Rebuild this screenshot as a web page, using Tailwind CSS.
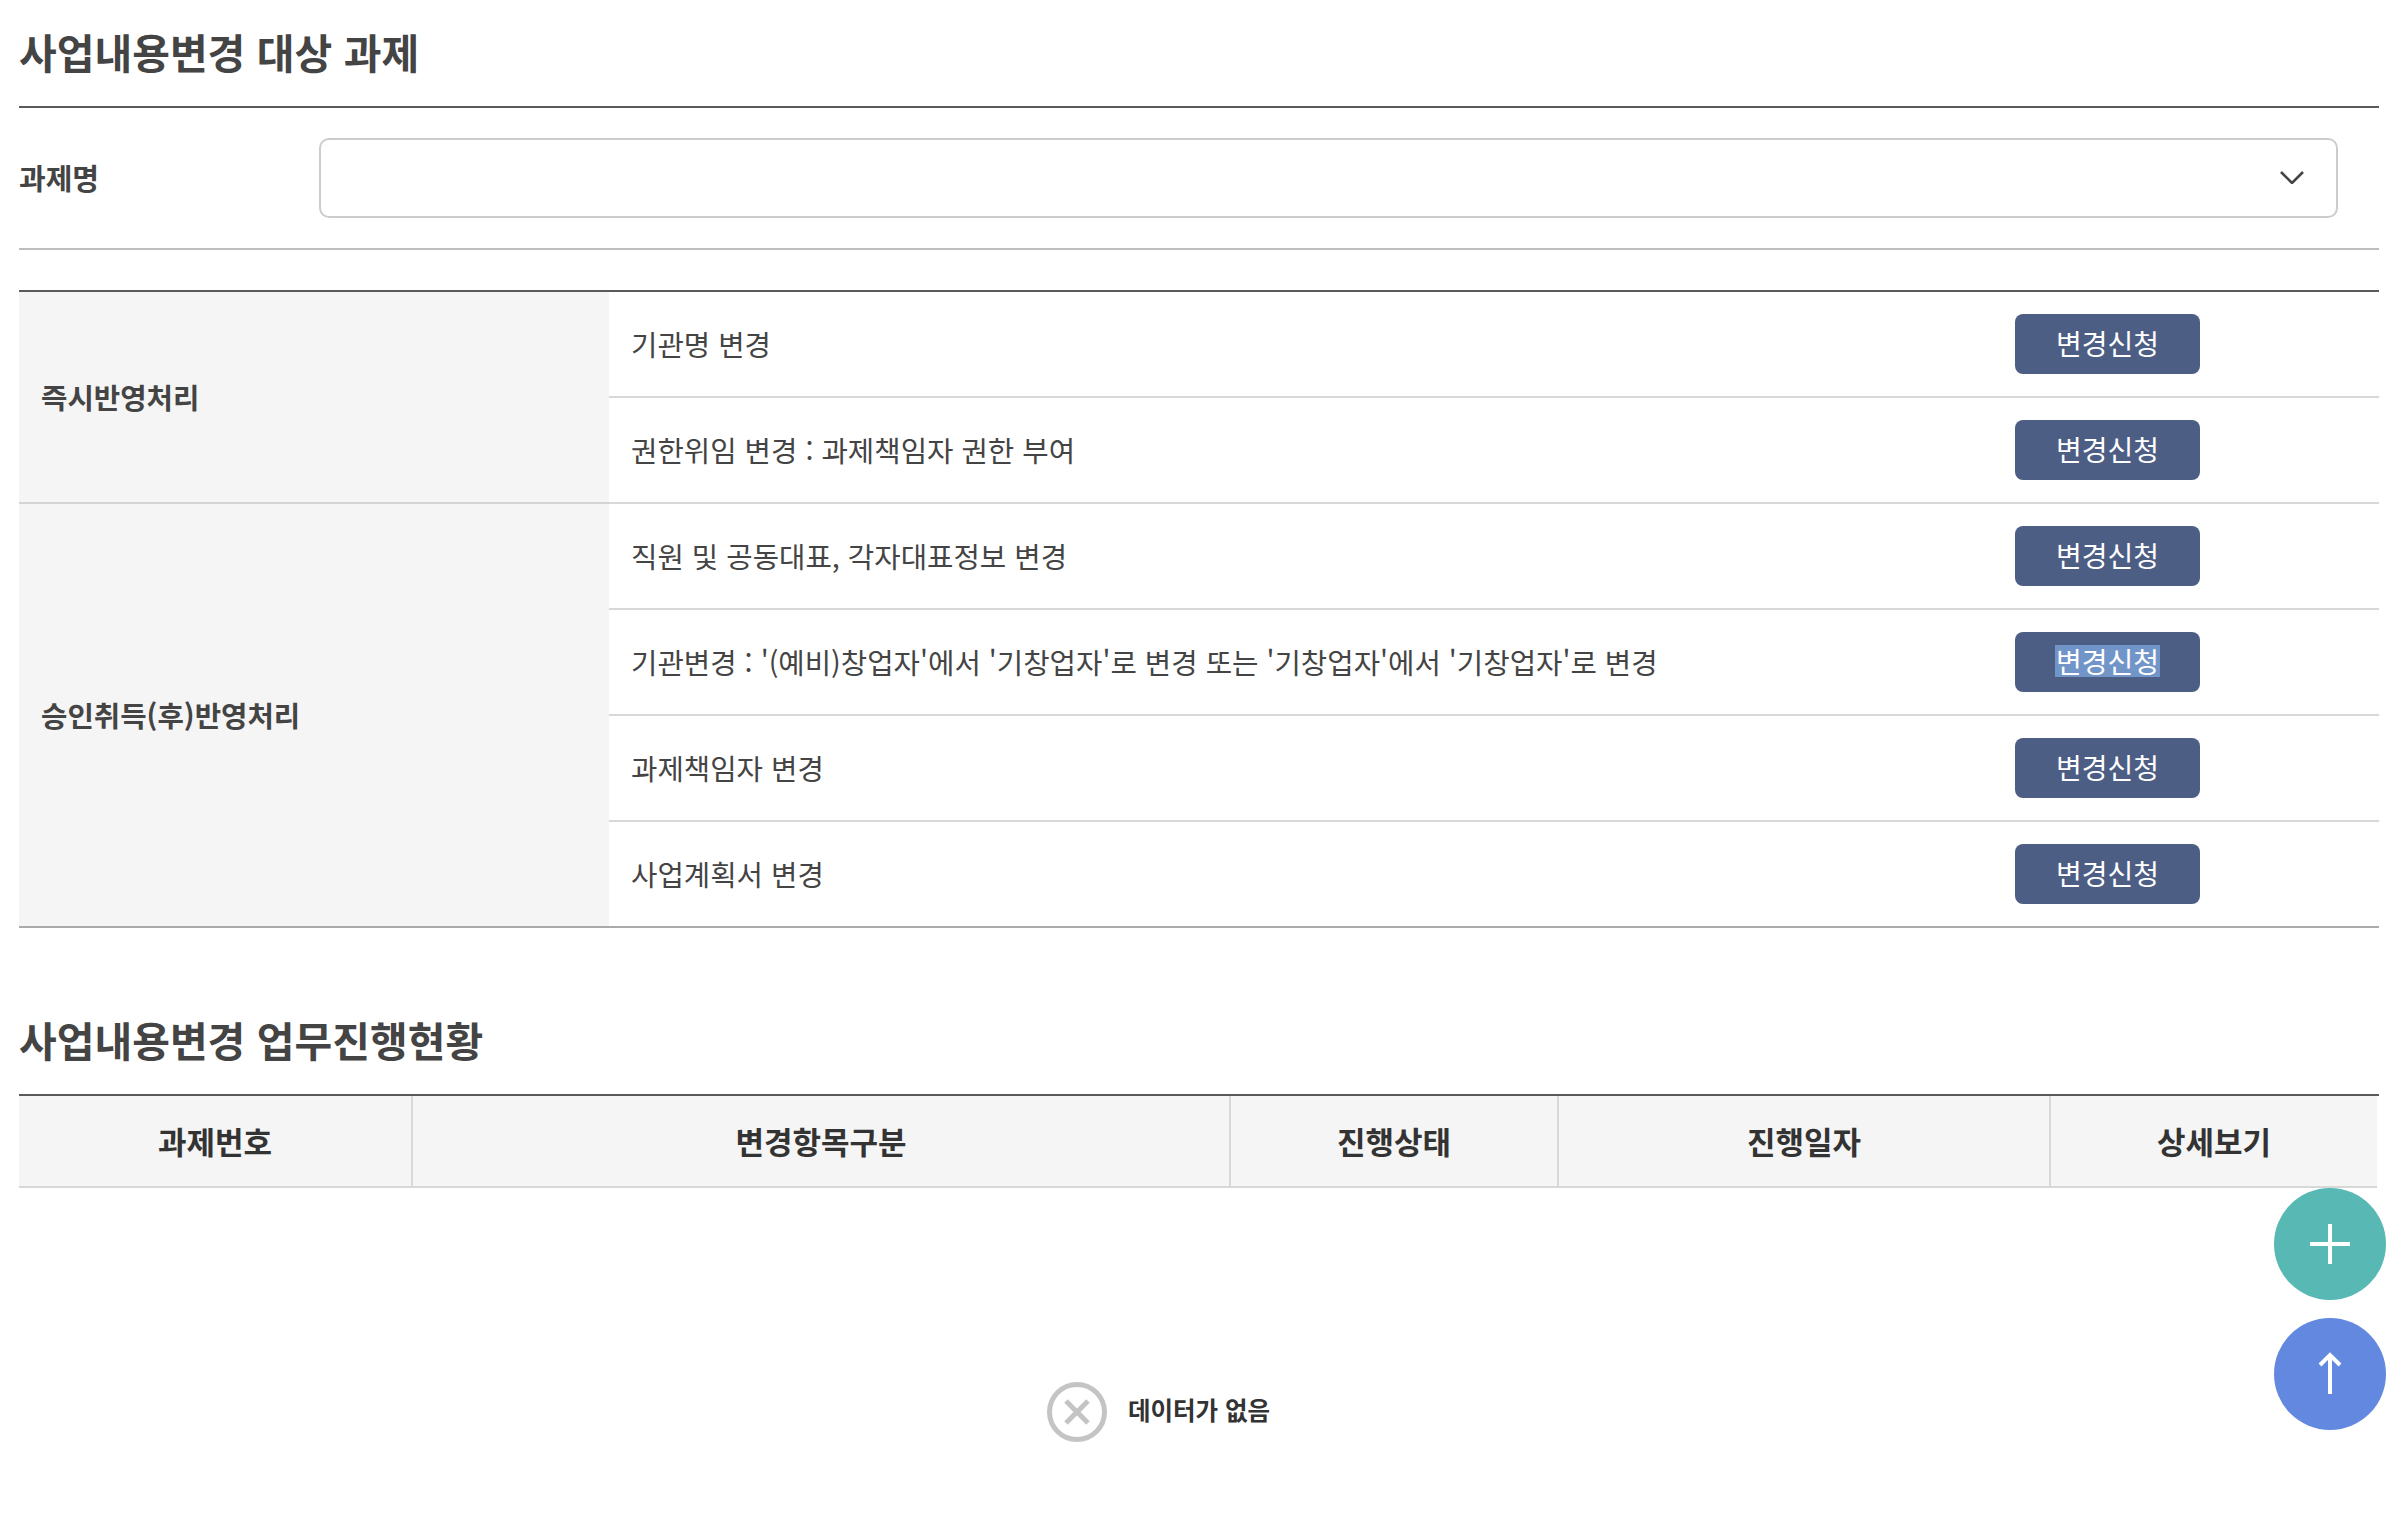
<!DOCTYPE html>
<html lang="ko">
<head>
    <meta charset="UTF-8">
    <title>사업내용변경</title>
    <script src="https://cdn.jsdelivr.net/npm/@tailwindcss/browser@4"></script>
</head>
<body class="relative h-[1536px] overflow-hidden bg-white font-['Noto_Sans_CJK_KR',sans-serif] text-[28.7px] text-[#444]">
    <main class="ml-[19px] w-[2360px]">
        <!-- 대상 과제 -->
        <section>
            <h2 class="flex h-[108px] items-center border-b-2 border-[#5a5a5a] pb-[2px] text-[41px] font-bold">사업내용변경 대상 과제</h2>
            <div class="flex items-center border-b-2 border-[#bdbdbd] pt-[30px] pb-[30px]">
                <label class="w-[300px] text-[29px] font-bold">과제명</label>
                <div class="relative h-[80px] w-[2019px] rounded-[10px] border-2 border-[#cccccc]">
                    <svg class="absolute right-[32px] top-[30px]" width="24" height="14" viewBox="0 0 24 14" fill="none" stroke="#444" stroke-width="2.6"><path d="M1 2l11 11L23 2"/></svg>
                </div>
            </div>
        </section>

        <table class="mt-[40px] w-full table-fixed border-separate border-spacing-0 border-t-2 border-[#5a5a5a]">
            <colgroup><col class="w-[590px]"><col><col class="w-[364px]"></colgroup>
            <tbody>
                <tr class="h-[106px]">
                    <th rowspan="2" class="border-b-2 border-[#d4d4d4] bg-[#f5f5f5] pl-[22px] text-left font-bold">즉시반영처리</th>
                    <td class="border-b-2 border-[#d8d8d8] pl-[22px]">기관명 변경</td>
                    <td class="border-b-2 border-[#d8d8d8]"><button class="h-[60px] w-[185px] rounded-[8px] bg-[#4d5e85] pb-[3px] text-[28px] text-white">변경신청</button></td>
                </tr>
                <tr class="h-[106px]">
                    <td class="border-b-2 border-[#d8d8d8] pl-[22px]">권한위임 변경 : 과제책임자 권한 부여</td>
                    <td class="border-b-2 border-[#d8d8d8]"><button class="h-[60px] w-[185px] rounded-[8px] bg-[#4d5e85] pb-[3px] text-[28px] text-white">변경신청</button></td>
                </tr>
                <tr class="h-[106px]">
                    <th rowspan="4" class="border-b-2 border-[#aaaaaa] bg-[#f5f5f5] pl-[22px] text-left font-bold">승인취득(후)반영처리</th>
                    <td class="border-b-2 border-[#d8d8d8] pl-[22px]">직원 및 공동대표, 각자대표정보 변경</td>
                    <td class="border-b-2 border-[#d8d8d8]"><button class="h-[60px] w-[185px] rounded-[8px] bg-[#4d5e85] pb-[3px] text-[28px] text-white">변경신청</button></td>
                </tr>
                <tr class="h-[106px]">
                    <td class="border-b-2 border-[#d8d8d8] pl-[22px]">기관변경 : '(예비)창업자'에서 '기창업자'로 변경 또는 '기창업자'에서 '기창업자'로 변경</td>
                    <td class="border-b-2 border-[#d8d8d8]"><button class="h-[60px] w-[185px] rounded-[8px] bg-[#4d5e85] pb-[3px] text-[28px] text-white"><span class="inline-block h-[32px] bg-[#7295c9] px-[1px] leading-[32px]">변경신청</span></button></td>
                </tr>
                <tr class="h-[106px]">
                    <td class="border-b-2 border-[#d8d8d8] pl-[22px]">과제책임자 변경</td>
                    <td class="border-b-2 border-[#d8d8d8]"><button class="h-[60px] w-[185px] rounded-[8px] bg-[#4d5e85] pb-[3px] text-[28px] text-white">변경신청</button></td>
                </tr>
                <tr class="h-[106px]">
                    <td class="border-b-2 border-[#aaaaaa] pl-[22px]">사업계획서 변경</td>
                    <td class="border-b-2 border-[#aaaaaa]"><button class="h-[60px] w-[185px] rounded-[8px] bg-[#4d5e85] pb-[3px] text-[28px] text-white">변경신청</button></td>
                </tr>
            </tbody>
        </table>

        <!-- 업무진행현황 -->
        <section>
            <h2 class="flex h-[166px] items-end pb-[24px] text-[41px] font-bold">사업내용변경 업무진행현황</h2>
            <div class="border-t-2 border-[#5a5a5a]">
                <table class="w-[2358px] table-fixed border-separate border-spacing-0">
                    <colgroup><col class="w-[394px]"><col class="w-[818px]"><col class="w-[328px]"><col class="w-[492px]"><col></colgroup>
                    <thead>
                        <tr class="h-[92px] bg-[#f5f5f5] text-[31px] font-bold text-[#333]">
                            <th class="border-r-2 border-b-2 border-[#d8d8d8]">과제번호</th>
                            <th class="border-r-2 border-b-2 border-[#d8d8d8]">변경항목구분</th>
                            <th class="border-r-2 border-b-2 border-[#d8d8d8]">진행상태</th>
                            <th class="border-r-2 border-b-2 border-[#d8d8d8]">진행일자</th>
                            <th class="border-b-2 border-[#d8d8d8]">상세보기</th>
                        </tr>
                    </thead>
                </table>
            </div>
            <div class="mt-[194px] flex items-center pl-[1028px]">
                <svg width="60" height="60" viewBox="0 0 60 60" fill="none" stroke="#c4c4c4"><circle cx="30" cy="30" r="27.5" stroke-width="5"/><path d="M19 19l22 22M41 19L19 41" stroke-width="5"/></svg>
                <span class="ml-[21px] pb-[4px] text-[24.5px] font-semibold text-[#333]">데이터가 없음</span>
            </div>
        </section>
    </main>

    <!-- 플로팅 버튼 -->
    <button class="absolute left-[2274px] top-[1188px] flex h-[112px] w-[112px] items-center justify-center rounded-full bg-[#57b8b4]">
        <svg width="40" height="40" viewBox="0 0 40 40" stroke="#fff" stroke-width="4"><path d="M20 0v40M0 20h40"/></svg>
    </button>
    <button class="absolute left-[2274px] top-[1318px] flex h-[112px] w-[112px] items-center justify-center rounded-full bg-[#6388e0]">
        <svg width="24" height="44" viewBox="0 0 24 44" fill="none" stroke="#fff" stroke-width="4"><path d="M12 3v39M2 13L12 3l10 10"/></svg>
    </button>
</body>
</html>
